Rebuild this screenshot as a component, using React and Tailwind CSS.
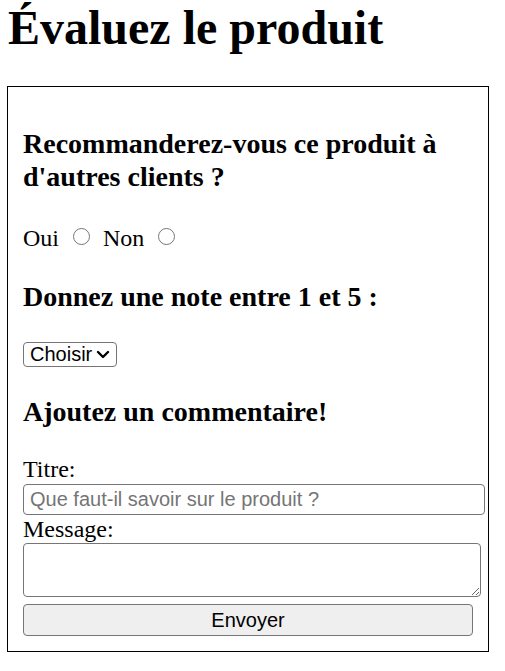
import React from "react";

export default function App() {
  return (
    <div className="min-h-[671px] bg-white px-[7px] text-black font-['Liberation_Serif',serif]">
      <h1 className="text-[48px] leading-[55px] font-bold pl-[1px]">Évaluez le produit</h1>

      <form
        className="mt-[31px] w-[482px] border border-black px-[15px] pb-[15px]"
        onSubmit={(e) => e.preventDefault()}
      >
        <h3 className="mt-[40px] text-[28px] leading-[33px] font-bold">
          Recommanderez-vous ce produit à d'autres clients ?
        </h3>

        <div className="mt-[31px] flex items-start text-[24px] leading-[28px]">
          <label className="flex items-start">
            <span>Oui</span>
            <input type="radio" name="reco" value="oui" className="sr-only" />
            <span className="ml-[14px] mt-[4px] h-[17px] w-[17px] rounded-full border border-[#767676] bg-white" />
          </label>
          <label className="ml-[13px] flex items-start">
            <span>Non</span>
            <input type="radio" name="reco" value="non" className="sr-only" />
            <span className="ml-[14px] mt-[4px] h-[17px] w-[17px] rounded-full border border-[#767676] bg-white" />
          </label>
        </div>

        <h3 className="mt-[28px] text-[28px] leading-[33px] font-bold">
          Donnez une note entre 1 et 5 :
        </h3>

        <div className="mt-[29px] flex h-[25px] w-[94px] items-center rounded-[4px] border border-[#767676] bg-white pl-[6px] font-['Liberation_Sans',Arial,sans-serif] text-[20px] leading-[23px]">
          <span>Choisir</span>
          <svg
            className="ml-[4px]"
            width="14"
            height="9"
            viewBox="0 0 14 9"
            fill="none"
            stroke="#000"
            strokeWidth="2.4"
            strokeLinecap="round"
            strokeLinejoin="round"
          >
            <path d="M2 2 L7 7 L12 2" />
          </svg>
        </div>

        <h3 className="mt-[28px] text-[28px] leading-[33px] font-bold">
          Ajoutez un commentaire!
        </h3>

        <div className="mt-[27px] text-[24px] leading-[28px]">Titre:</div>
        <input
          type="text"
          placeholder="Que faut-il savoir sur le produit ?"
          className="mt-[1px] block h-[31px] w-[462px] rounded-[4px] border border-[#767676] bg-white px-[6px] font-['Liberation_Sans',Arial,sans-serif] text-[20px] leading-[23px] placeholder:text-[#757575] outline-none"
        />

        <div className="text-[24px] leading-[28px]">Message:</div>
        <textarea
          className="block h-[54px] w-[458px] resize rounded-[4px] border border-[#767676] bg-white px-[3px] font-['Liberation_Mono',monospace] text-[20px] outline-none"
        />

        <button
          type="submit"
          className="mt-[7px] block h-[32px] w-[450px] rounded-[4px] border border-[#767676] bg-[#efefef] text-center font-['Liberation_Sans',Arial,sans-serif] text-[20px] leading-[23px] text-black"
        >
          Envoyer
        </button>
      </form>
    </div>
  );
}
